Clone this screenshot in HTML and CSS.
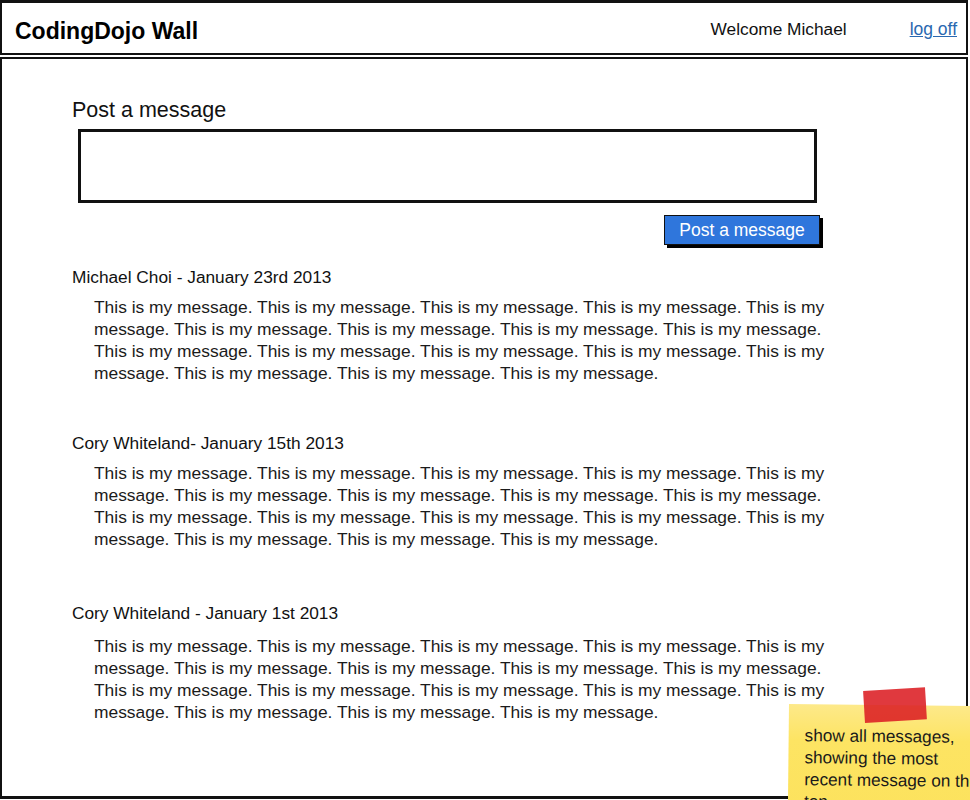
FILE: index.html
```html
<!DOCTYPE html>
<html lang="en">
<head>
<meta charset="utf-8">
<title>CodingDojo Wall</title>
<link rel="stylesheet" href="styles.css">
</head>
<body>
<div class="page">
  <header class="topbar">
    <h1 class="brand">CodingDojo Wall</h1>
    <span class="welcome">Welcome Michael</span>
    <a class="logoff" href="#">log off</a>
  </header>
  <main class="wall">
    <section class="composer">
      <h2 class="composer-title">Post a message</h2>
      <div class="composer-box"></div>
      <div class="composer-actions">
        <button class="post-btn" type="button">Post a message</button>
      </div>
    </section>
    <section class="messages">
      <article class="message">
        <h3 class="message-head">Michael Choi - January 23rd 2013</h3>
        <p class="message-body">This is my message. This is my message. This is my message. This is my message. This is my message. This is my message. This is my message. This is my message. This is my message. This is my message. This is my message. This is my message. This is my message. This is my message. This is my message. This is my message. This is my message.</p>
      </article>
      <article class="message">
        <h3 class="message-head">Cory Whiteland- January 15th 2013</h3>
        <p class="message-body">This is my message. This is my message. This is my message. This is my message. This is my message. This is my message. This is my message. This is my message. This is my message. This is my message. This is my message. This is my message. This is my message. This is my message. This is my message. This is my message. This is my message.</p>
      </article>
      <article class="message message--late">
        <h3 class="message-head">Cory Whiteland - January 1st 2013</h3>
        <p class="message-body">This is my message. This is my message. This is my message. This is my message. This is my message. This is my message. This is my message. This is my message. This is my message. This is my message. This is my message. This is my message. This is my message. This is my message. This is my message. This is my message. This is my message.</p>
      </article>
    </section>
  </main>
  <aside class="sticky">
    <span class="tape"></span>
    <p class="sticky-text">show all messages, showing the most recent message on the top</p>
  </aside>
</div>
</body>
</html>
```

FILE: styles.css
```css
html, body {
  margin: 0;
  padding: 0;
  background: #ffffff;
  overflow: hidden;
}
body {
  font-family: "Liberation Sans", Arial, sans-serif;
  color: #1b1b1b;
}
.page {
  position: relative;
  width: 970px;
  height: 800px;
  overflow: hidden;
}
.topbar {
  box-sizing: border-box;
  width: 968px;
  height: 55px;
  border: 2px solid #111;
  border-top-width: 3px;
  display: flex;
  align-items: center;
  padding: 3px 9px 0 13px;
}
.brand {
  margin: 0;
  flex: 1;
  font-size: 23px;
  font-weight: bold;
  color: #000;
  padding-top: 3px;
}
.welcome {
  font-size: 17.3px;
  color: #111;
  margin-right: 63px;
}
.logoff {
  font-size: 17.5px;
  color: #2a68b0;
  text-decoration: underline;
}
.wall {
  box-sizing: border-box;
  width: 968px;
  height: 742px;
  margin-top: 2px;
  border: 2px solid #111;
  border-bottom-width: 3px;
  padding: 38px 0 0 70px;
}
.composer {
  width: 748px;
}
.composer-title {
  margin: 0;
  font-size: 21.5px;
  line-height: 26px;
  font-weight: normal;
  color: #111;
}
.composer-box {
  box-sizing: border-box;
  width: 739px;
  height: 74px;
  margin: 6px 0 0 6px;
  border: 3px solid #111;
  background: #fff;
}
.composer-actions {
  display: flex;
  justify-content: flex-end;
  margin-top: 12px;
}
.post-btn {
  box-sizing: border-box;
  width: 156px;
  height: 30px;
  border: 1px solid #111;
  background: #2f76dc;
  color: #fff;
  font-family: inherit;
  font-size: 17.5px;
  padding: 0;
  box-shadow: 3px 3px 0 #000;
  cursor: pointer;
}
.messages {
  margin-top: 21px;
  display: flex;
  flex-direction: column;
  gap: 48px;
}
.message--late {
  margin-top: 4px;
}
.message--late .message-body {
  margin-top: 11px;
}
.message-head {
  margin: 0;
  font-size: 17.3px;
  line-height: 22px;
  font-weight: normal;
  color: #111;
}
.message-body {
  margin: 8px 0 0 22px;
  width: 742px;
  font-size: 17.4px;
  line-height: 22px;
  color: #1b1b1b;
}
.sticky {
  position: absolute;
  left: 789px;
  top: 704px;
  width: 230px;
  height: 120px;
  background: linear-gradient(#fde98a, #fde463 30%, #fce25c);
  transform: rotate(0.6deg);
  transform-origin: left top;
}
.tape {
  position: absolute;
  left: 75px;
  top: -16px;
  width: 62px;
  height: 32px;
  background: rgba(220, 30, 35, 0.88);
  transform: rotate(-4deg);
}
.sticky-text {
  margin: 0;
  padding: 20px 0 0 16px;
  width: 184px;
  font-size: 17.2px;
  line-height: 22px;
  color: #1a1a1a;
}
```
